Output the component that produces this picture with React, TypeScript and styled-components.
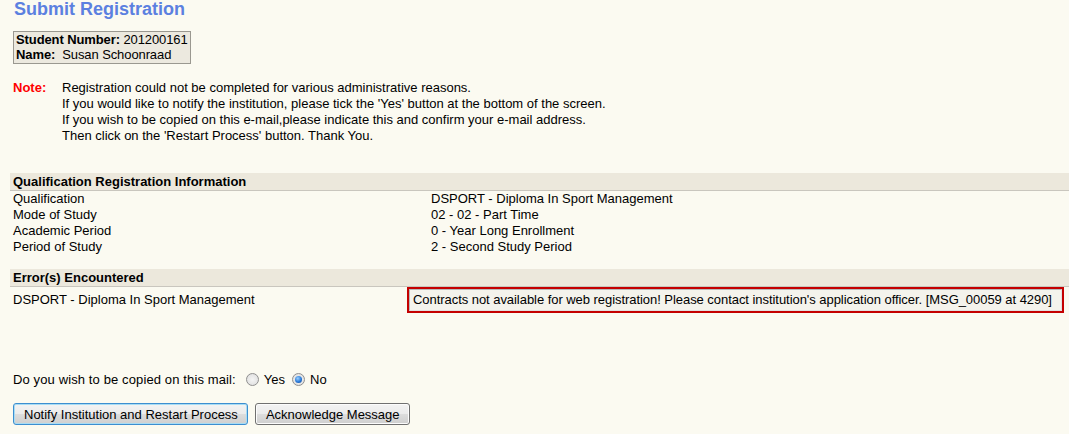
import React from "react";
import styled, { createGlobalStyle } from "styled-components";

const Global = createGlobalStyle`
  html, body { margin: 0; padding: 0; background: #fbfaf1; }
  body { font-family: "Liberation Sans", Arial, sans-serif; font-size: 13px; color: #000; }
`;

const Page = styled.div`
  width: 1069px;
  height: 434px;
  overflow: hidden;
  background: #fbfaf1;
`;

const Inner = styled.div`
  padding-left: 13px;
`;

const Title = styled.h1`
  margin: 0;
  padding: 1px 0 0 1px;
  font-size: 18px;
  line-height: 16px;
  font-weight: bold;
  color: #5b80e0;
`;

const StudentBox = styled.div`
  display: inline-block;
  margin-top: 14px;
  padding: 0 2px 1px 2px;
  border: 1px solid #9a9890;
  background: #ece9df;
  line-height: 15px;
  letter-spacing: -0.1px;
`;

const B = styled.b`
  font-weight: bold;
`;

const Note = styled.div`
  display: grid;
  grid-template-columns: 49px 1fr;
  margin-top: 16px;
  line-height: 16px;
`;

const NoteLabel = styled.span`
  color: #ff0000;
  font-weight: bold;
`;

const Section = styled.section<{ $gap: number }>`
  margin-top: ${(p) => p.$gap}px;
  margin-left: 10px;
`;

const Band = styled.div`
  padding-left: 3px;
  height: 17px;
  line-height: 17px;
  background: #ece8dc;
  border-bottom: 1px solid #c9c6be;
  font-weight: bold;
`;

const Grid = styled.div`
  display: grid;
  grid-template-columns: 418px 1fr;
  padding-left: 3px;
  line-height: 16px;
`;

const Cell = styled.div`
  display: flex;
  align-items: center;
`;

const ErrorBox = styled.div`
  width: 657px;
  box-sizing: border-box;
  margin-left: -24px;
  border: 2px solid #c40000;
  display: flex;
`;

const ErrorInner = styled.div`
  flex: 1;
  border: 1px solid #b8b8b8;
  border-right-color: #e0e0e0;
  border-bottom-color: #e0e0e0;
  padding: 2px 3px 2px 3px;
  line-height: 16px;
  white-space: nowrap;
  letter-spacing: -0.05px;
  background: #f4f3ec;
`;

const Question = styled.div`
  display: flex;
  align-items: center;
  margin-top: 58px;
  height: 16px;
`;

const QuestionLabel = styled.span`
  letter-spacing: 0.12px;
`;

const Radio = styled.span<{ $checked?: boolean }>`
  display: inline-block;
  box-sizing: border-box;
  width: 13px;
  height: 13px;
  border-radius: 50%;
  border: 1px solid #8f8f8f;
  background: radial-gradient(circle at 50% 50%, #f4f4f4 0%, #dcdcdc 100%);
  margin: 0 5px 0 ${(p) => (p.$checked ? 7 : 10)}px;
  position: relative;
  &::after {
    content: "";
    display: ${(p) => (p.$checked ? "block" : "none")};
    position: absolute;
    left: 2px;
    top: 2px;
    width: 7px;
    height: 7px;
    border-radius: 50%;
    background: radial-gradient(circle at 40% 35%, #9ad0ff 0%, #2a7ad8 55%, #10408c 100%);
  }
`;

const Buttons = styled.div`
  display: flex;
  gap: 7px;
  margin-top: 16px;
`;

const Button = styled.button<{ $focused?: boolean }>`
  font-family: "Liberation Sans", Arial, sans-serif;
  font-size: 13px;
  height: 22px;
  padding: 0 9px 0 10px;
  border: 1px solid ${(p) => (p.$focused ? "#3c8ed0" : "#707070")};
  border-radius: 3px;
  background: linear-gradient(#f3f3f3 0%, #ebebeb 50%, #dddddd 51%, #cfcfcf 100%);
  color: #000;
  box-shadow: ${(p) => (p.$focused ? "inset 0 0 0 1px #a8dcf4" : "inset 0 0 0 1px #fcfcfc")};
`;

const rows: [string, string][] = [
  ["Qualification", "DSPORT - Diploma In Sport Management"],
  ["Mode of Study", "02 - 02 - Part Time"],
  ["Academic Period", "0 - Year Long Enrollment"],
  ["Period of Study", "2 - Second Study Period"],
];

export default function App() {
  return (
    <Page>
      <Global />
      <Inner>
        <Title>Submit Registration</Title>
        <StudentBox>
          <div>
            <B>Student Number:</B> 201200161
          </div>
          <div>
            <B>Name:</B>&nbsp; Susan Schoonraad
          </div>
        </StudentBox>
        <Note>
          <NoteLabel>Note:</NoteLabel>
          <div>
            <div>Registration could not be completed for various administrative reasons.</div>
            <div>If you would like to notify the institution, please tick the 'Yes' button at the bottom of the screen.</div>
            <div>If you wish to be copied on this e-mail,please indicate this and confirm your e-mail address.</div>
            <div>Then click on the 'Restart Process' button. Thank You.</div>
          </div>
        </Note>
      </Inner>
      <Section $gap={29}>
        <Band>Qualification Registration Information</Band>
        <Grid>
          {rows.map(([l, v]) => (
            <React.Fragment key={l}>
              <Cell>{l}</Cell>
              <Cell>{v}</Cell>
            </React.Fragment>
          ))}
        </Grid>
      </Section>
      <Section $gap={14}>
        <Band>Error(s) Encountered</Band>
        <Grid>
          <Cell>DSPORT - Diploma In Sport Management</Cell>
          <Cell>
            <ErrorBox>
              <ErrorInner>
                Contracts not available for web registration! Please contact institution's application officer. [MSG_00059 at 4290]
              </ErrorInner>
            </ErrorBox>
          </Cell>
        </Grid>
      </Section>
      <Inner>
        <Question>
          <QuestionLabel>Do you wish to be copied on this mail:</QuestionLabel>
          <Radio />
          <span>Yes</span>
          <Radio $checked />
          <span>No</span>
        </Question>
        <Buttons>
          <Button $focused>Notify Institution and Restart Process</Button>
          <Button>Acknowledge Message</Button>
        </Buttons>
      </Inner>
    </Page>
  );
}
